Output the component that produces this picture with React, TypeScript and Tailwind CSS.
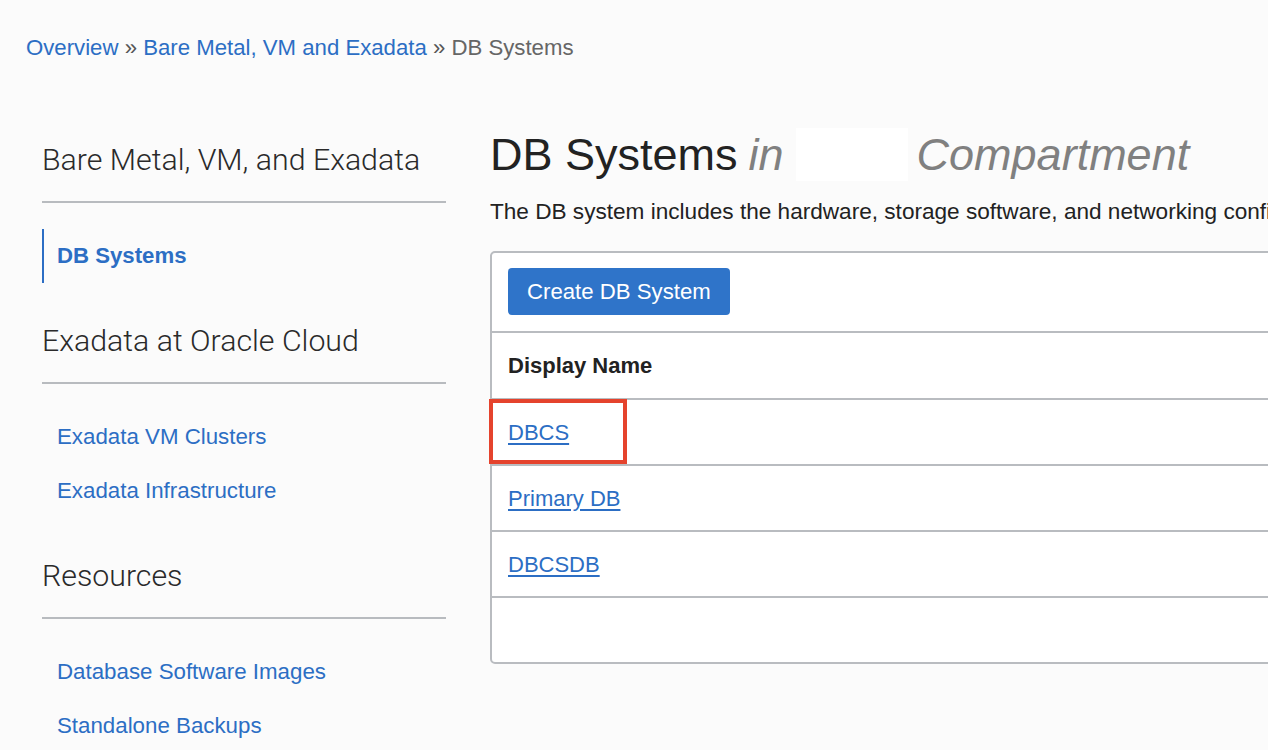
import React from "react";

const linkBlue = "text-[#2c6ec4]";

interface SectionProps {
    title: string;
    items: { label: string; active?: boolean }[];
    first?: boolean;
}

function SidebarSection(props: SectionProps) {
    return (
        <div className={props.first ? "mt-[22px]" : "mt-[40px]"}>
            <div className="h-[36px] leading-[36px] text-[30.3px] font-light text-[#2a2a2a] whitespace-nowrap font-['Roboto','Liberation_Sans',sans-serif]">{props.title}</div>
            <div className="mt-[23px] h-[2px] bg-[#b8bbbf]"></div>
            <div className="mt-[26px] flex flex-col">
                {props.items.map((item) => (
                    <div
                        key={item.label}
                        className={
                            item.active
                                ? "h-[54px] flex items-center pl-[13px] border-l-2 border-[#2c6ec4] text-[22.2px] font-bold text-[#2c6ec4]"
                                : "h-[54px] flex items-center pl-[15px] text-[22.3px] text-[#2c6ec4]"
                        }
                    >
                        {item.label}
                    </div>
                ))}
            </div>
        </div>
    );
}

const rows = ["DBCS", "Primary DB", "DBCSDB"];

export default function App() {
    return (
        <div className="w-[1268px] h-[750px] overflow-hidden bg-[#fbfbfb] font-['Liberation_Sans',Arial,sans-serif]">
            <div className="pt-[35px] pl-[26px] h-[61px] leading-[26px] text-[22.2px] whitespace-nowrap">
                <span className={linkBlue}>Overview</span>
                <span className="text-[#555]"> » </span>
                <span className={linkBlue}>Bare Metal, VM and Exadata</span>
                <span className="text-[#555]"> » </span>
                <span className="text-[#666]">DB Systems</span>
            </div>

            <div className="mt-[59px] flex">
                <div className="ml-[42px] w-[404px] shrink-0">
                    <SidebarSection first title="Bare Metal, VM, and Exadata" items={[{ label: "DB Systems", active: true }]} />
                    <SidebarSection title="Exadata at Oracle Cloud" items={[{ label: "Exadata VM Clusters" }, { label: "Exadata Infrastructure" }]} />
                    <SidebarSection title="Resources" items={[{ label: "Database Software Images" }, { label: "Standalone Backups" }]} />
                </div>

                <div className="ml-[44px] w-[900px] shrink-0">
                    <div className="mt-[8px] h-[53px] flex items-center text-[45px] whitespace-nowrap">
                        <span className="text-[#222]">DB Systems</span>
                        <span className="ml-[11px] italic text-[#808080]">in</span>
                        <span className="ml-[12px] w-[112px] h-[53px] bg-white"></span>
                        <span className="ml-[9px] italic text-[#808080]">Compartment</span>
                    </div>
                    <div className="mt-[18px] h-[26px] leading-[26px] text-[22.6px] text-[#222] whitespace-nowrap">
                        The DB system includes the hardware, storage software, and networking configuration needed to host an Oracle Database.
                    </div>

                    <div className="relative mt-[26px] border-2 border-[#b9bcc0] rounded-[5px] bg-white">
                        <div className="h-[78px] pt-[15px] px-4">
                            <button className="h-[47px] px-[19px] rounded-[4px] bg-[#2f74c9] text-white text-[22.2px]">Create DB System</button>
                        </div>
                        <div className="h-[67px] border-t-2 border-[#b9bcc0] flex items-center px-4 text-[22px] font-bold text-[#222]">Display Name</div>
                        {rows.map((r) => (
                            <div key={r} className="h-[66px] border-t-2 border-[#b9bcc0] flex items-center px-4">
                                <a className="text-[22px] text-[#2c6ec4] underline underline-offset-[3px]">{r}</a>
                            </div>
                        ))}
                        <div className="h-[66px] border-t-2 border-[#b9bcc0]"></div>

                        <div className="absolute left-[-3px] top-[146px] w-[138px] h-[65px] border-[4px] border-[#e5432d]"></div>
                    </div>
                </div>
            </div>
        </div>
    );
}
